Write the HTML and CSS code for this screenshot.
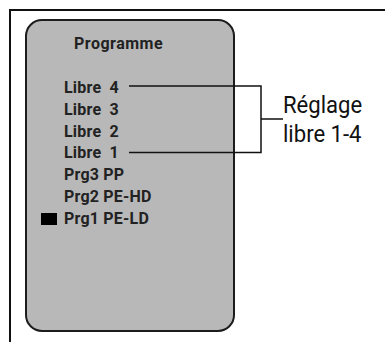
FILE: index.html
```html
<!DOCTYPE html>
<html lang="fr">

<head>
    <meta charset="UTF-8">
    <meta name="viewport" content="width=device-width, initial-scale=1.0">
    <title>Programme</title>
    <link rel="stylesheet" href="styles.css">
</head>

<body>
    <div class="frame">
        <div class="screen">
            <h3 class="screen-title">Programme</h3>
            <ul class="prog-list">
                <li>Libre&nbsp; 4</li>
                <li>Libre&nbsp; 3</li>
                <li>Libre&nbsp; 2</li>
                <li>Libre&nbsp; 1</li>
                <li>Prg3 PP</li>
                <li>Prg2 PE-HD</li>
                <li class="active">Prg1 PE-LD</li>
            </ul>
        </div>

        <!-- bracket pointing at the four free slots -->
        <svg class="bracket" width="160" height="80" viewBox="0 0 160 80">
            <path d="M0 1 H132 V67.5 H0 M132 34 H154" fill="none" stroke="#111" stroke-width="1.5"/>
        </svg>
        <div class="callout">Réglage<br>libre 1-4</div>
    </div>
</body>

</html>
```

FILE: styles.css
```css
body {
    margin: 0;
    padding: 0;
    background: #fff;
    font-family: Roboto, "Liberation Sans", sans-serif;
    color: #111;
}

.frame {
    position: relative;
    margin: 9px 0 0 9px;
    height: 340px;
    border-top: 2px solid #111;
    border-left: 2px solid #111;
}

.screen {
    margin: 8px 0 0 14px;
    width: 206px;
    height: 309px;
    border: 2px solid #1c1c1c;
    border-radius: 17px;
    background-color: #b8b8b8;
}

.screen-title {
    margin: 0;
    padding: 12px 0 0 47px;
    font-size: 16px;
    font-weight: bold;
    line-height: 22px;
    letter-spacing: 0.5px;
    color: #222;
}

.prog-list {
    list-style: none;
    margin: 22px 0 0;
    padding: 0 0 0 37px;
    font-size: 16px;
    font-weight: bold;
    line-height: 21.8px;
    letter-spacing: 0.2px;
    color: #222;
}

.prog-list li {
    position: relative;
}

/* cursor block in front of the selected programme */
.prog-list li.active::before {
    content: "";
    position: absolute;
    left: -23px;
    top: 5px;
    width: 16px;
    height: 12px;
    background: #000;
}

.bracket {
    position: absolute;
    left: 118px;
    top: 74px;
}

.callout {
    position: absolute;
    left: 272px;
    top: 80px;
    font-size: 24px;
    line-height: 29px;
    transform: scaleX(0.92);
    transform-origin: left top;
}
```
